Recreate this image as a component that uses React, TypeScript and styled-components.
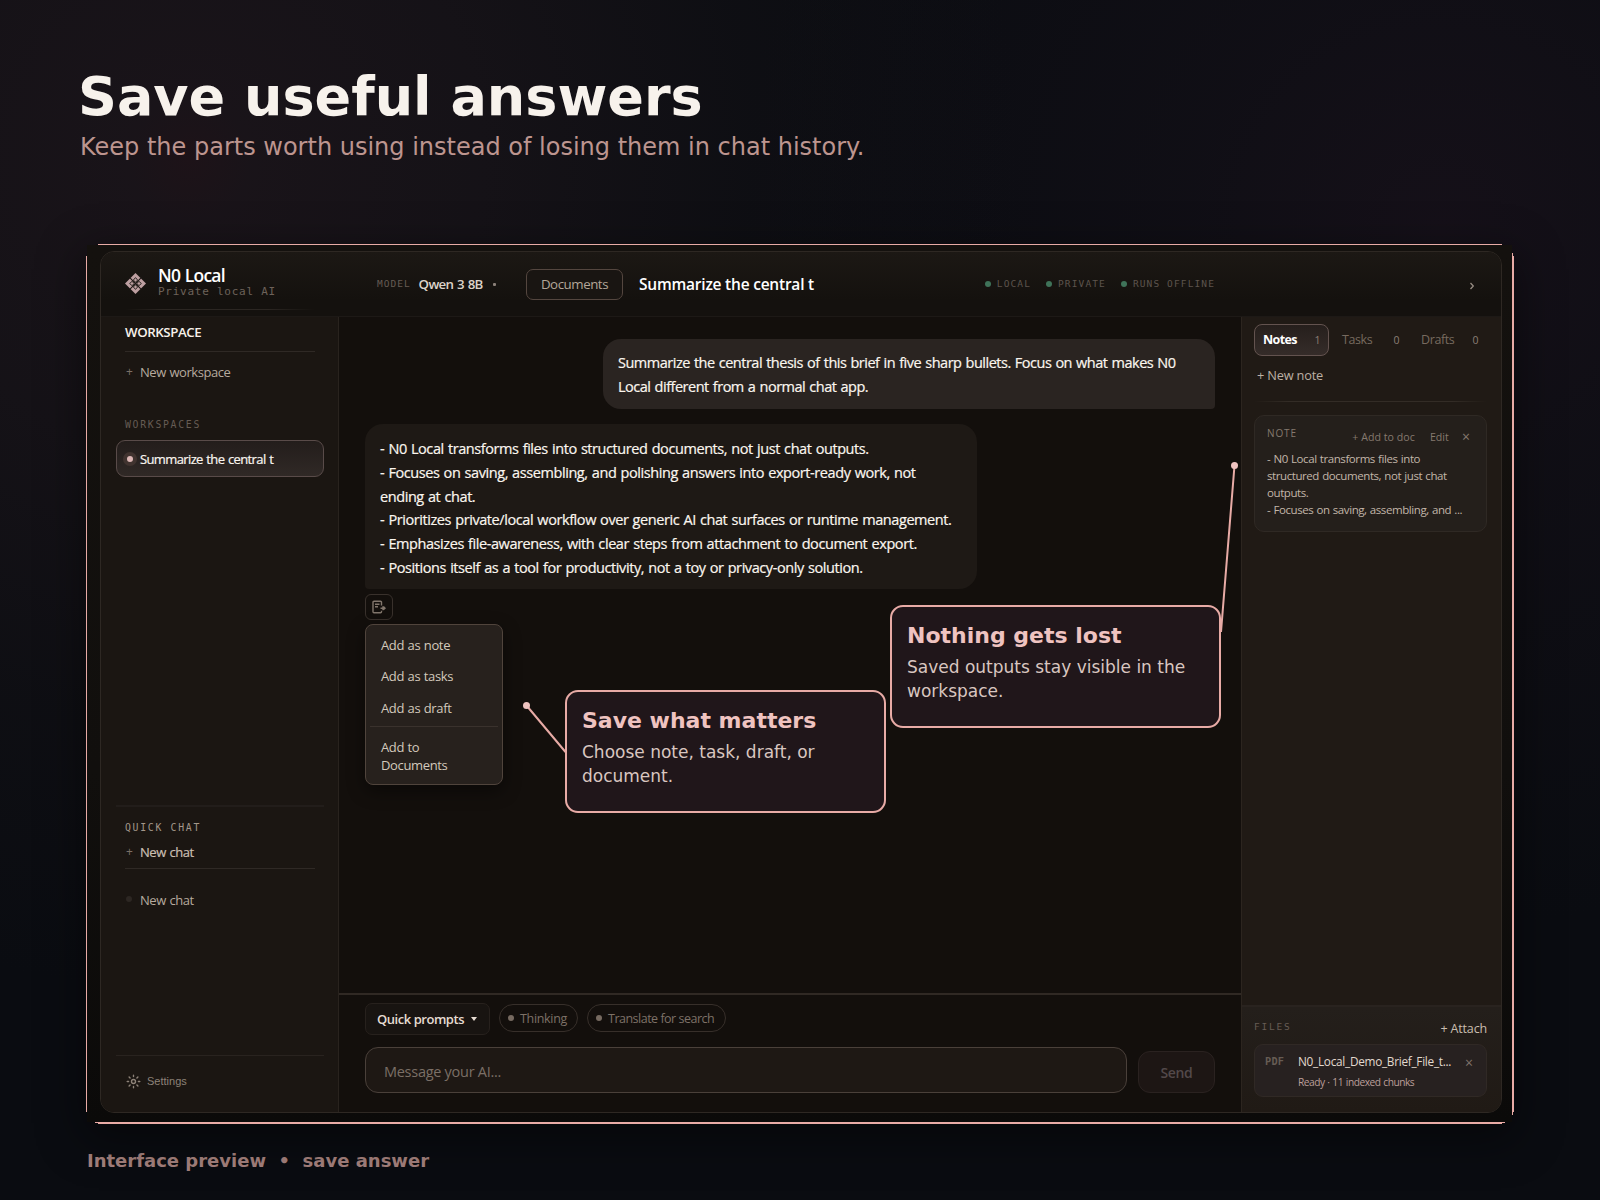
import React from 'react';
import styled, { createGlobalStyle, css } from 'styled-components';

const Global = createGlobalStyle`
  *, *::before, *::after { box-sizing: border-box; }
  body { margin: 0; background: #090b10; }
`;

const ui = `"Open Sans", "Noto Sans", sans-serif`;
const display = `"DejaVu Sans", sans-serif`;
const mono = `"DejaVu Sans Mono", monospace`;
const rose = '#e8aba6';

/* ---------- page ---------- */
const Page = styled.main`
  position: relative;
  width: 1600px;
  height: 1200px;
  overflow: hidden;
  padding: 67px 86px 0;
  font-family: ${display};
  background:
    radial-gradient(circle at 190px 160px, rgba(48, 25, 31, 0.5) 0, rgba(42, 28, 34, 0.47) 60px, rgba(36, 26, 31, 0.42) 300px, rgba(24, 20, 24, 0.3) 560px, transparent 830px),
    radial-gradient(circle at 1440px 230px, rgba(32, 20, 32, 0.5) 0, rgba(24, 18, 27, 0.42) 260px, transparent 700px),
    #0a0c11;
`;
const Headline = styled.h1`
  margin: 0 0 0 -8px;
  font-size: 54px;
  line-height: 60px;
  font-weight: 700;
  color: #f7f2ec;
`;
const Subline = styled.p`
  margin: 5px 0 0 -6px;
  font-size: 24px;
  line-height: 30px;
  color: #bd958f;
`;
const Caption = styled.footer`
  margin: 25px 0 0 1px;
  font-size: 18px;
  line-height: 24px;
  font-weight: 700;
  color: #a6827e;
  white-space: pre;
`;

/* ---------- framed window ---------- */
const Frame = styled.section`
  position: relative;
  width: 1428px;
  height: 880px;
  margin-top: 82px;
  padding: 7px 0 0 14px;
  background:
    linear-gradient(${rose}, ${rose}) 12px 0 / 1404px 1px no-repeat,
    linear-gradient(${rose}, ${rose}) 0 12px / 1px 856px no-repeat,
    linear-gradient(${rose}, ${rose}) 1426px 9px / 1px 862px no-repeat,
    linear-gradient(${rose}, ${rose}) 1427px 12px / 1px 856px no-repeat,
    linear-gradient(${rose}, ${rose}) 9px 878px / 1410px 1px no-repeat,
    linear-gradient(${rose}, ${rose}) 12px 879px / 1404px 1px no-repeat,
    linear-gradient(#14110e, #110f0d 60%, #0b0a09) 1px 1px / 1425px 877px no-repeat;

  &::before {
    content: '';
    position: absolute;
    inset: 10px;
    z-index: -1;
    box-shadow: 0 12px 44px 12px rgba(0, 0, 0, 0.45);
  }
`;
const Stage = styled.div`
  position: relative;
  z-index: 0;
`;
const Window = styled.div`
  width: 1402px;
  height: 862px;
  display: flex;
  flex-direction: column;
  border: 1px solid #2e2823;
  border-radius: 14px;
  overflow: hidden;
  background: #13100d;
  font-family: ${ui};
  color: #f5efe8;
`;
const TopBar = styled.header`
  flex: none;
  height: 65px;
  display: flex;
  align-items: center;
  background: linear-gradient(#1c1814, #14110e 75%);
  border-bottom: 1px solid #1d1916;
`;
const Brand = styled.div`
  width: 238px;
  height: 64px;
  padding: 0 0 6px 24px;
  display: flex;
  align-items: center;
  gap: 12px;
  background: linear-gradient(90deg, transparent, #2b2622 20%, #2b2622 75%, transparent) 24px 57px / 190px 1px no-repeat;
`;
const BrandText = styled.div`
  display: flex;
  flex-direction: column;
`;
const BrandName = styled.strong`
  font-size: 17.5px;
  line-height: 20px;
  font-weight: 600;
  letter-spacing: -0.8px;
  word-spacing: 1px;
  color: #fff;
`;
const BrandTag = styled.span`
  font: 11px/13px ${mono};
  letter-spacing: 0.75px;
  color: #6d625a;
`;
const Mono = styled.span<{ $track?: number; $color?: string; $bold?: boolean; $size?: number }>`
  font: ${(p) => (p.$bold ? 700 : 400)} ${(p) => p.$size ?? 9.5}px/16px ${mono};
  letter-spacing: ${(p) => p.$track ?? 1}px;
  color: ${(p) => p.$color ?? '#665c54'};
  white-space: nowrap;
`;
const ModelPicker = styled.div`
  width: 149px;
  margin-left: 38px;
  display: flex;
  align-items: center;
  gap: 8px;
`;
const ModelName = styled.span`
  font-size: 13.3px;
  font-weight: 600;
  letter-spacing: -0.7px;
  word-spacing: 1px;
  color: #ddd3ca;
`;
const Tick = styled.i`
  width: 3px;
  height: 3px;
  margin: 1px 0 0 2px;
  border-radius: 1px;
  background: #8b8078;
`;
const DocsButton = styled.button`
  width: 97px;
  height: 31px;
  padding: 0;
  border: 1px solid #54463f;
  border-radius: 7px;
  background: #191512;
  font: 400 13.3px ${ui};
  letter-spacing: -0.45px;
  color: #b3a698;
`;
const ThreadTitle = styled.h2`
  margin: 0 0 0 16px;
  font-size: 15.5px;
  font-weight: 600;
  letter-spacing: -0.22px;
  color: #fff;
`;
const StatusList = styled.div`
  margin-left: auto;
  padding-right: 1px;
  display: flex;
  gap: 15px;
`;
const Status = styled.span`
  display: flex;
  align-items: center;
  gap: 6px;

  &::before {
    content: '';
    width: 6px;
    height: 6px;
    border-radius: 50%;
    background: #3f7359;
  }
`;
const Collapse = styled.div`
  width: 285px;
  padding: 3px 24px 0 0;
  display: flex;
  justify-content: flex-end;
  color: #968b82;
`;
const Body = styled.div`
  flex: 1;
  display: grid;
  grid-template-columns: 238px 902px 260px;
  min-height: 0;
`;

/* ---------- sidebar ---------- */
const Sidebar = styled.aside`
  padding: 0 14px 0 15px;
  display: flex;
  flex-direction: column;
  background: #1b1612;
  border-right: 1px solid #29231e;
`;
const SideHeading = styled.h3`
  height: 35px;
  margin: 0 9px;
  padding-bottom: 5px;
  display: flex;
  align-items: center;
  border-bottom: 1px solid #2f2925;
  font-size: 13.3px;
  font-weight: 600;
  letter-spacing: -0.42px;
  color: #f7f1ea;
`;
const SideAction = styled.div<{ $h: number; $ruled?: boolean }>`
  height: ${(p) => p.$h}px;
  margin: 0 9px;
  padding-bottom: 1px;
  display: flex;
  align-items: center;
  font-size: 13px;
  letter-spacing: -0.45px;
  word-spacing: 0.7px;
  color: #b6aa9e;
  ${(p) => p.$ruled && css`
    padding-bottom: 1px;
    border-bottom: 1px solid #2f2925;
    color: #cabfb2;
    -webkit-text-stroke: 0.2px;
  `}
`;
const Lead = styled.span`
  width: 15px;
  padding-left: 1px;
  font-size: 12px;
  color: #7b7067;
  -webkit-text-stroke: 0;
`;
const FaintDot = styled.i`
  width: 6px;
  height: 6px;
  margin: 0 8px 2px 1px;
  border-radius: 50%;
  background: #2d2723;
`;
const SideLabel = styled.div<{ $top: number; $bottom: number }>`
  height: 16px;
  margin: ${(p) => p.$top}px 9px ${(p) => p.$bottom}px;
  display: flex;
`;
const ActiveItem = styled.div`
  height: 37px;
  padding-left: 6px;
  display: flex;
  align-items: center;
  gap: 3px;
  border: 1px solid #594b49;
  border-radius: 9px;
  background: linear-gradient(#231d1b, #302926);
  font-size: 13px;
  letter-spacing: -0.62px;
  word-spacing: 0.8px;
  color: #faf5ef;
  -webkit-text-stroke: 0.2px;
`;
const GlowDot = styled.i`
  width: 14px;
  height: 14px;
  border: 4px solid #40332f;
  border-radius: 50%;
  background: #dcb7b5;
`;
const QuickChat = styled.div`
  margin-top: auto;
  height: 250px;
  border-top: 2px solid #221d1a;
`;
const Gap = styled.div<{ $h: number }>`
  height: ${(p) => p.$h}px;
`;
const SettingsRow = styled.div`
  height: 57px;
  padding: 0 0 6px 10px;
  display: flex;
  align-items: center;
  gap: 6px;
  border-top: 1px solid #29231f;
  font: 11px "Liberation Sans", sans-serif;
  color: #8d8278;
`;

/* ---------- conversation ---------- */
const Conversation = styled.section`
  display: flex;
  flex-direction: column;
  background: #130f0c;
`;
const Thread = styled.div`
  flex: 1;
  padding: 22px 26px 0;
  display: flex;
  flex-direction: column;
`;
const Bubble = styled.div<{ $user?: boolean }>`
  width: 612px;
  height: ${(p) => (p.$user ? 70 : 165)}px;
  padding: ${(p) => (p.$user ? 12 : 12.7)}px 15px 0;
  align-self: ${(p) => (p.$user ? 'flex-end' : 'flex-start')};
  margin-bottom: ${(p) => (p.$user ? 15 : 5)}px;
  border-radius: ${(p) => (p.$user ? '18px 18px 4px 18px' : '18px 18px 18px 4px')};
  background: ${(p) => (p.$user ? '#2a2421' : '#1e1915')};
  font-size: 14.5px;
  line-height: ${(p) => (p.$user ? 24 : 23.9)}px;
  color: #fbf6ef;
  letter-spacing: ${(p) => (p.$user ? '-0.49px' : '-0.42px')};
  word-spacing: 0.8px;
  -webkit-text-stroke: 0.2px;
  white-space: nowrap;
`;
const SaveAnchor = styled.div`
  position: relative;
  width: 28px;
`;
const SaveButton = styled.button`
  width: 28px;
  height: 26px;
  padding: 0;
  display: grid;
  place-items: center;
  border: 1px solid #39312c;
  border-radius: 6px;
  background: transparent;
  color: #82766c;
`;
const Menu = styled.div`
  position: absolute;
  top: 30px;
  left: 0;
  width: 138px;
  height: 161px;
  padding: 5px 4px;
  border: 1px solid #50443c;
  border-radius: 8px;
  background: #27211d;
  box-shadow: 0 6px 18px rgba(0, 0, 0, 0.45);
`;
const MenuItem = styled.div`
  padding: 7px 11px;
  font-size: 13px;
  line-height: 17.4px;
  letter-spacing: -0.36px;
  word-spacing: 0.5px;
  color: #d3c9bc;
`;
const MenuRule = styled.hr`
  height: 1px;
  margin: 2px 0 5px;
  border: 0;
  background: #3a322d;
`;

/* ---------- composer ---------- */
const Composer = styled.div`
  height: 119px;
  padding: 8px 26px 0;
  border-top: 2px solid #302924;
`;
const PromptRow = styled.div`
  display: flex;
  align-items: flex-start;
  gap: 9px;
  margin-bottom: 12px;
`;
const QuickPrompts = styled.div`
  width: 125px;
  height: 32px;
  padding-left: 11px;
  display: flex;
  align-items: center;
  gap: 7px;
  border: 1px solid #27211d;
  border-radius: 7px;
  background: #181411;
  font-size: 13px;
  font-weight: 600;
  letter-spacing: -0.46px;
  color: #e6dcd2;
`;
const Caret = styled.i`
  border: 3px solid transparent;
  border-top: 4px solid #e6dcd2;
  border-bottom: 0;
`;
const Pill = styled.div<{ $w: number; $ls: number }>`
  width: ${(p) => p.$w}px;
  height: 28px;
  margin-top: 1px;
  padding: 0 0 0 8px;
  display: flex;
  align-items: center;
  gap: 6px;
  border: 1px solid #372f2a;
  border-radius: 14px;
  font-size: 12.5px;
  letter-spacing: ${(p) => p.$ls}px;
  color: #7d7167;
  white-space: nowrap;

  &::before {
    content: '';
    width: 6px;
    height: 6px;
    border-radius: 50%;
    background: #766a60;
  }
`;
const InputRow = styled.div`
  display: flex;
  align-items: flex-end;
  gap: 11px;
`;
const MessageBox = styled.div`
  width: 762px;
  height: 46px;
  padding: 2px 0 0 18px;
  display: flex;
  align-items: center;
  border: 1px solid #4a403a;
  border-radius: 13px;
  background: #1e1814;
  font-size: 14.5px;
  letter-spacing: -0.28px;
  color: #7b6f66;
`;
const SendButton = styled.button`
  width: 77px;
  height: 42px;
  padding: 0;
  border: 1px solid #2a2220;
  border-radius: 12px;
  background: #1d1614;
  font: 600 14px ${ui};
  letter-spacing: -0.34px;
  color: #53494a;
`;

/* ---------- notes panel ---------- */
const Panel = styled.aside`
  display: flex;
  flex-direction: column;
  border-left: 1px solid #2c251f;
  background: #201a15;
`;
const PanelTop = styled.div`
  flex: 1;
  padding: 7px 14px 0 12px;
`;
const Tabs = styled.div`
  display: grid;
  grid-template-columns: repeat(3, 75px);
  gap: 4px;
`;
const Tab = styled.div<{ $active?: boolean }>`
  height: 32px;
  padding: 0 8px 1px;
  display: flex;
  align-items: center;
  justify-content: space-between;
  border: 1px solid transparent;
  border-radius: 8px;
  font-size: 12.5px;
  letter-spacing: -0.4px;
  color: #776a5f;
  ${(p) =>
    p.$active &&
    css`
      border-color: #63534f;
      background: linear-gradient(#261f1c, #352c29);
      font-weight: 700;
      letter-spacing: -0.6px;
      color: #fff;
    `}
`;
const Count = styled.span`
  padding-top: 1px;
  font-size: 10.5px;
  font-weight: 400;
  color: #8b7f75;
`;
const NewNote = styled.div`
  height: 40px;
  padding: 0 0 3px 3px;
  display: flex;
  align-items: center;
  font-size: 12.8px;
  letter-spacing: -0.2px;
  color: #bcb0a3;
`;
const FadeRule = styled.div`
  height: 1px;
  margin: 5px 0 13px;
  background: linear-gradient(90deg, transparent, #332c26 15%, #332c26 85%, transparent);
`;
const NoteCard = styled.article`
  height: 117px;
  padding: 10px 12px 0;
  border: 1px solid #2f2924;
  border-radius: 10px;
  background: #241f1b;
`;
const NoteHead = styled.div`
  height: 25px;
  padding-right: 4px;
  display: flex;
  color: #85796e;
`;
const NoteKind = styled.span`
  margin-right: auto;
  font-size: 10px;
  line-height: 15px;
  letter-spacing: 0.9px;
`;
const NoteAction = styled.span<{ $gap?: number; $size?: number }>`
  margin: 3px 0 0 ${(p) => p.$gap ?? 0}px;
  font-size: ${(p) => p.$size ?? 10.6}px;
  line-height: 16px;
  letter-spacing: 0.05px;
`;
const NoteBody = styled.div`
  font-size: 11.5px;
  line-height: 16.9px;
  letter-spacing: -0.42px;
  word-spacing: 0.6px;
  color: #c2b6a9;
  white-space: nowrap;
`;
const Files = styled.div`
  height: 107px;
  padding: 12px 13px 0 12px;
  border-top: 2px solid #29231f;
  background: linear-gradient(#241f1b, #201a15);
`;
const FilesHead = styled.div`
  height: 25px;
  padding-right: 1px;
  display: flex;
  justify-content: space-between;
`;
const Attach = styled.span`
  font-size: 12.5px;
  line-height: 19px;
  letter-spacing: -0.15px;
  color: #c9bdaf;
`;
const FileCard = styled.div`
  width: 233px;
  height: 53px;
  padding: 8px 13px 0 10px;
  display: grid;
  grid-template-columns: 33px 1fr auto;
  align-content: start;
  border: 1px solid #302925;
  border-radius: 9px;
  background: #272120;
`;
const FileName = styled.span`
  font-size: 11.8px;
  line-height: 17px;
  letter-spacing: -0.28px;
  color: #e2d9ce;
  white-space: nowrap;
`;
const FileState = styled.span`
  grid-column: 2;
  margin-top: 3px;
  font-size: 10.2px;
  line-height: 16px;
  letter-spacing: -0.5px;
  word-spacing: 0.7px;
  color: #bc9f9a;
`;
const Cross = styled.span`
  padding-top: 1px;
  font-size: 14px;
  line-height: 17px;
  color: #7f736a;
`;

/* ---------- annotations ---------- */
const Callout = styled.div<{ $x: number; $y: number; $w: number }>`
  position: absolute;
  left: ${(p) => p.$x}px;
  top: ${(p) => p.$y}px;
  width: ${(p) => p.$w}px;
  height: 123px;
  padding: 16px 0 0 15px;
  border: 2px solid ${rose};
  border-radius: 13px;
  background: #20161a;
  white-space: nowrap;
`;
const CalloutTitle = styled.h4`
  margin: 0;
  font-size: 22px;
  line-height: 26px;
  color: #efc3c0;
`;
const CalloutText = styled.p`
  margin: 6px 0 0;
  font-size: 17px;
  line-height: 24px;
  color: #d9c6c0;
`;
const Pointers = styled.svg`
  position: absolute;
  left: 0;
  top: 0;
  pointer-events: none;
`;
const LogoMark = styled.svg`
  flex: none;
  margin-top: 4px;
`;

const Logo = () => (
  <LogoMark width="21" height="21" viewBox="0 0 21 21">
    <path d="M10.5 0 21 10.5 10.5 21 0 10.5Z" fill="#bd9fa1" />
    <g stroke="#1a1613" strokeWidth="1.1" fill="none">
      <path d="M5.2 5.2 15.8 15.8M15.8 5.2 5.2 15.8" />
      <path
        d="M10.5 4.6 12.6 7 10.5 9.3 8.4 7ZM10.5 11.7 12.6 14 10.5 16.4 8.4 14ZM4.6 10.5 7 8.4 9.3 10.5 7 12.6ZM11.7 10.5 14 8.4 16.4 10.5 14 12.6Z"
        strokeWidth="0.9"
      />
    </g>
  </LogoMark>
);
const SaveIcon = () => (
  <svg width="14" height="14" viewBox="0 0 14 14" fill="none" stroke="currentColor" strokeWidth="1.4">
    <path d="M9.5 5.4V2.2a1 1 0 0 0-1-1H2a1 1 0 0 0-1 1v9.6a1 1 0 0 0 1 1h6.5a1 1 0 0 0 1-1v-1" />
    <path d="M3 4.3h4.5M3 6.7h3" />
    <path d="M8.5 8.2h4.5M11 6.2v4M11.6 6.8 13 8.2l-1.4 1.4" />
  </svg>
);
const GearIcon = () => (
  <svg width="15" height="15" viewBox="0 0 15 15" fill="none" stroke="currentColor" strokeWidth="1.4" strokeLinecap="round">
    <circle cx="7.5" cy="7.5" r="2" />
    <path d="M7.5 1.2v1.4M7.5 12.4v1.4M1.2 7.5h1.4M12.4 7.5h1.4M3.1 3.1l1 1M10.9 10.9l1 1M11.9 3.1l-1 1M4.1 10.9l-1 1" />
  </svg>
);

const answer = [
  '- N0 Local transforms files into structured documents, not just chat outputs.',
  '- Focuses on saving, assembling, and polishing answers into export-ready work, not',
  'ending at chat.',
  '- Prioritizes private/local workflow over generic AI chat surfaces or runtime management.',
  '- Emphasizes file-awareness, with clear steps from attachment to document export.',
  '- Positions itself as a tool for productivity, not a toy or privacy-only solution.',
];
const notePreview = [
  '- N0 Local transforms files into',
  'structured documents, not just chat',
  'outputs.',
  '- Focuses on saving, assembling, and ...',
];

export default function App() {
  return (
    <Page>
      <Global />
      <Headline>Save useful answers</Headline>
      <Subline>Keep the parts worth using instead of losing them in chat history.</Subline>
      <Stage>
        <Frame>
          <Window>
            <TopBar>
              <Brand>
                <Logo />
                <BrandText>
                  <BrandName>N0 Local</BrandName>
                  <BrandTag>Private local AI</BrandTag>
                </BrandText>
              </Brand>
              <ModelPicker>
                <Mono>MODEL</Mono>
                <ModelName>Qwen 3 8B</ModelName>
                <Tick />
              </ModelPicker>
              <DocsButton>Documents</DocsButton>
              <ThreadTitle>Summarize the central t</ThreadTitle>
              <StatusList>
                {['LOCAL', 'PRIVATE', 'RUNS OFFLINE'].map((s) => (
                  <Status key={s}><Mono $track={1.12} $color="#5d544d">{s}</Mono></Status>
                ))}
              </StatusList>
              <Collapse>
                <svg width="10" height="10" viewBox="0 0 10 10" fill="none" stroke="currentColor" strokeWidth="1.3">
                  <path d="M3.5 2 6.3 5l-2.8 3" />
                </svg>
              </Collapse>
            </TopBar>
            <Body>
              <Sidebar>
                <SideHeading>WORKSPACE</SideHeading>
                <SideAction $h={40}><Lead>+</Lead>New workspace</SideAction>
                <SideLabel $top={25} $bottom={7}><Mono $size={9.8} $track={1.7}>WORKSPACES</Mono></SideLabel>
                <ActiveItem><GlowDot />Summarize the central t</ActiveItem>
                <QuickChat>
                  <SideLabel $top={13} $bottom={0}><Mono $size={9.8} $track={1.7} $color="#a3978a">QUICK CHAT</Mono></SideLabel>
                  <SideAction $h={33} $ruled><Lead>+</Lead>New chat</SideAction>
                  <Gap $h={13} />
                  <SideAction $h={36}><FaintDot />New chat</SideAction>
                </QuickChat>
                <SettingsRow><GearIcon />Settings</SettingsRow>
              </Sidebar>
              <Conversation>
                <Thread>
                  <Bubble $user>
                    Summarize the central thesis of this brief in five sharp bullets. Focus on what makes N0
                    <br />
                    Local different from a normal chat app.
                  </Bubble>
                  <Bubble>
                    {answer.map((line) => <div key={line}>{line}</div>)}
                  </Bubble>
                  <SaveAnchor>
                    <SaveButton><SaveIcon /></SaveButton>
                    <Menu>
                      <MenuItem>Add as note</MenuItem>
                      <MenuItem>Add as tasks</MenuItem>
                      <MenuItem>Add as draft</MenuItem>
                      <MenuRule />
                      <MenuItem>Add to<br />Documents</MenuItem>
                    </Menu>
                  </SaveAnchor>
                </Thread>
                <Composer>
                  <PromptRow>
                    <QuickPrompts>Quick prompts<Caret /></QuickPrompts>
                    <Pill $w={79} $ls={-0.32}>Thinking</Pill>
                    <Pill $w={139} $ls={-0.5}>Translate for search</Pill>
                  </PromptRow>
                  <InputRow>
                    <MessageBox>Message your AI...</MessageBox>
                    <SendButton>Send</SendButton>
                  </InputRow>
                </Composer>
              </Conversation>
              <Panel>
                <PanelTop>
                  <Tabs>
                    <Tab $active>Notes<Count>1</Count></Tab>
                    <Tab>Tasks<Count>0</Count></Tab>
                    <Tab>Drafts<Count>0</Count></Tab>
                  </Tabs>
                  <NewNote>+ New note</NewNote>
                  <FadeRule />
                  <NoteCard>
                    <NoteHead>
                      <NoteKind>NOTE</NoteKind>
                      <NoteAction>+ Add to doc</NoteAction>
                      <NoteAction $gap={15}>Edit</NoteAction>
                      <NoteAction $gap={13} $size={14}>×</NoteAction>
                    </NoteHead>
                    <NoteBody>
                      {notePreview.map((line) => <div key={line}>{line}</div>)}
                    </NoteBody>
                  </NoteCard>
                </PanelTop>
                <Files>
                  <FilesHead>
                    <Mono $track={1.8}>FILES</Mono>
                    <Attach>+ Attach</Attach>
                  </FilesHead>
                  <FileCard>
                    <Mono $size={10.3} $track={0.2} $bold>PDF</Mono>
                    <FileName>N0_Local_Demo_Brief_File_t...</FileName>
                    <Cross>×</Cross>
                    <FileState>Ready · 11 indexed chunks</FileState>
                  </FileCard>
                </Files>
              </Panel>
            </Body>
          </Window>
        </Frame>
      </Stage>
      <Caption>{'Interface preview  •  save answer'}</Caption>
      <Callout $x={565} $y={690} $w={321}>
        <CalloutTitle>Save what matters</CalloutTitle>
        <CalloutText>Choose note, task, draft, or<br />document.</CalloutText>
      </Callout>
      <Callout $x={890} $y={605} $w={331}>
        <CalloutTitle>Nothing gets lost</CalloutTitle>
        <CalloutText>Saved outputs stay visible in the<br />workspace.</CalloutText>
      </Callout>
      <Pointers width="1600" height="1200">
        <g stroke={rose} strokeWidth="2" fill="none">
          <path d="M526.5 705.5 565.5 752M1234.5 465.5 1221 632" />
        </g>
        <g fill="#efc3c0">
          <circle cx="526.5" cy="705.5" r="3.5" />
          <circle cx="1234.5" cy="465.5" r="3.5" />
        </g>
      </Pointers>
    </Page>
  );
}
